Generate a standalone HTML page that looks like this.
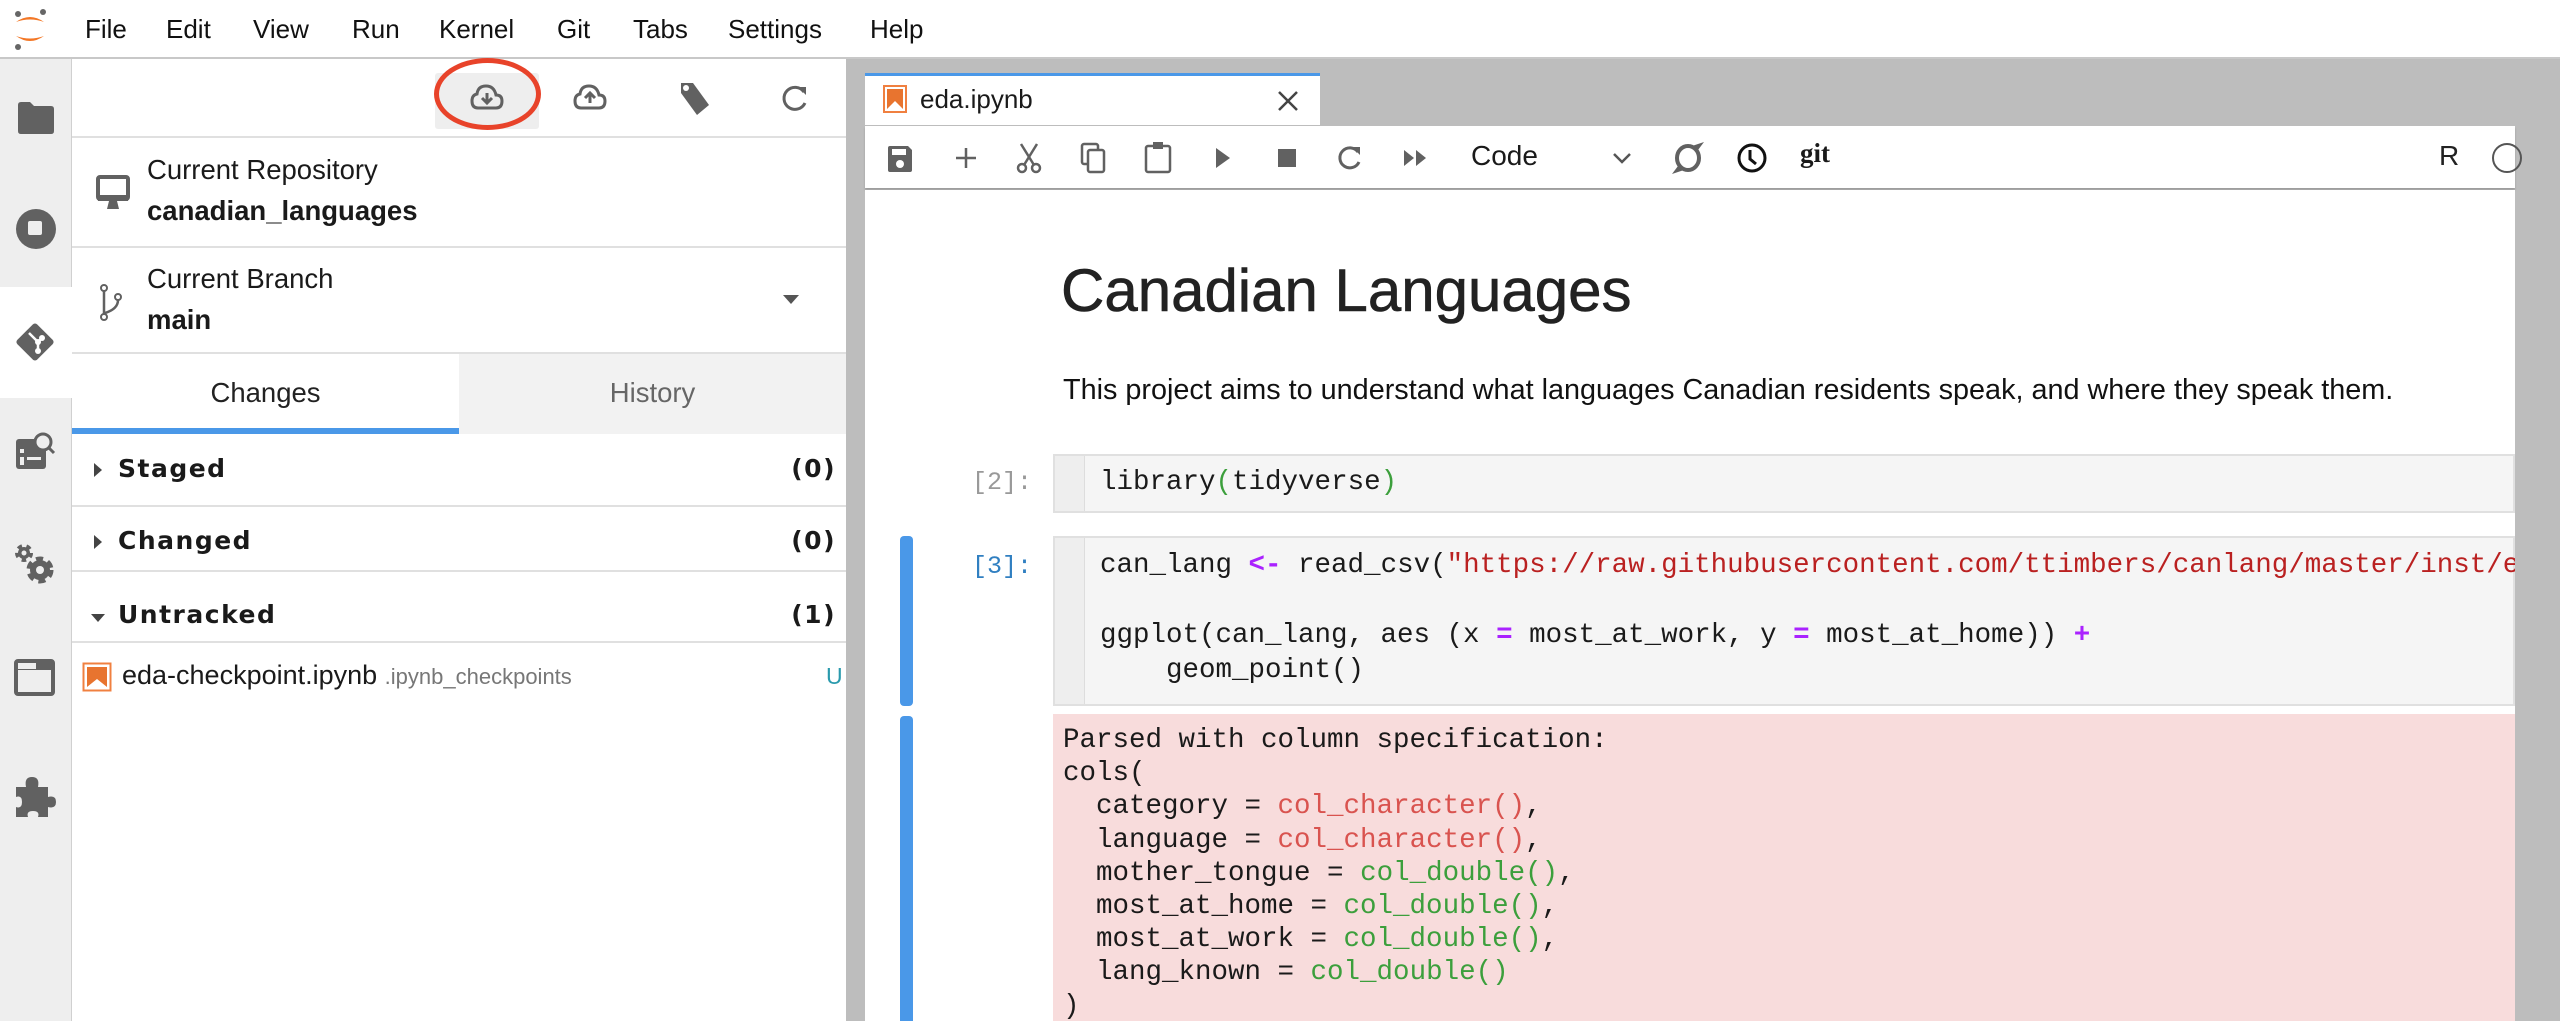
<!DOCTYPE html>
<html><head><meta charset="utf-8"><style>
*{box-sizing:border-box;margin:0;padding:0}
body{width:2560px;height:1021px;overflow:hidden;background:#bdbdbd;font-family:"Liberation Sans",sans-serif;color:#1a1a1a;position:relative}
.abs{position:absolute}
.menu{left:0;top:0;width:2560px;height:59px;background:#fff;border-bottom:2px solid #c8c8c8}
.menu span{position:absolute;top:14px;font-size:26px;color:#111}
.side{left:0;top:59px;width:72px;height:962px;background:#eeeeee;border-right:1px solid #d0d0d0}
.panel{left:72px;top:59px;width:774px;height:962px;background:#fff}
.hr{position:absolute;left:0;width:774px;height:2px;background:#e0e0e0}
.t26{font-size:27.5px;position:absolute}
.sec{position:absolute;left:0;width:774px;font-weight:bold;letter-spacing:1.5px;font-family:"DejaVu Sans","Liberation Sans",sans-serif;font-size:25px}
.mono{font-family:"Liberation Mono","DejaVu Sans Mono",monospace;font-size:27.5px;white-space:pre}
.pu{color:#aa22ff;font-weight:bold}
.st{color:#ba2121}
.rd{color:#d9534f}
.gr{color:#3c9f3c}
</style></head><body>

<div class="abs menu">
  <svg class="abs" style="left:10px;top:6px" width="40" height="46" viewBox="0 0 40 46">
    <circle cx="8" cy="8" r="3" fill="#666"/><circle cx="33" cy="6" r="3" fill="#666"/><circle cx="8" cy="41" r="3" fill="#666"/>
    <path d="M6 16 Q20 6 34 16 Q20 11 6 16Z" fill="#f37726"/>
    <path d="M6 30 Q20 40 34 30 Q20 35 6 30Z" fill="#f37726"/>
  </svg>
  <span style="left:85px">File</span><span style="left:166px">Edit</span><span style="left:253px">View</span><span style="left:352px">Run</span><span style="left:439px">Kernel</span><span style="left:557px">Git</span><span style="left:633px">Tabs</span><span style="left:728px">Settings</span><span style="left:870px">Help</span>
</div>

<div class="abs side">
  <div class="abs" style="left:0;top:228px;width:72px;height:111px;background:#fff"></div>
  <svg class="abs" style="left:16px;top:42px" width="40" height="34" viewBox="0 0 40 34"><path d="M2 4 Q2 1 5 1 H14 L18 5 H35 Q38 5 38 8 V30 Q38 33 35 33 H5 Q2 33 2 30Z" fill="#616161"/></svg>
  <svg class="abs" style="left:14px;top:148px" width="44" height="44" viewBox="0 0 44 44"><circle cx="22" cy="22" r="20" fill="#616161"/><rect x="14" y="14" width="14" height="14" rx="2" fill="#eee"/></svg>
  <svg class="abs" style="left:12px;top:260px" width="46" height="46" viewBox="0 0 46 46"><rect x="9" y="9" width="28" height="28" transform="rotate(45 23 23)" rx="3" fill="#616161"/><path d="M17 14 L26 23 V32 M26 23 L30 19" stroke="#fff" stroke-width="2.5" fill="none"/><circle cx="26" cy="32" r="3" fill="#fff"/><circle cx="30" cy="19" r="3" fill="#fff"/><circle cx="26" cy="23" r="3" fill="#fff"/></svg>
  <svg class="abs" style="left:16px;top:372px" width="42" height="40" viewBox="0 0 42 40"><rect x="0" y="8" width="30" height="30" rx="3" fill="#616161"/><rect x="4" y="18" width="4" height="4" fill="#eee"/><rect x="4" y="26" width="4" height="8" fill="#eee"/><rect x="11" y="26" width="14" height="3" fill="#eee"/><circle cx="27" cy="11" r="8" fill="#eee" stroke="#616161" stroke-width="3"/><path d="M32 16 L38 22" stroke="#616161" stroke-width="3"/></svg>
  <svg class="abs" style="left:14px;top:484px" width="42" height="42" viewBox="0 0 42 42"><circle cx="10" cy="10" r="6" fill="#616161"/><circle cx="10" cy="10" r="7" fill="none" stroke="#616161" stroke-width="4" stroke-dasharray="4.4 4.4"/><circle cx="10" cy="10" r="2.5" fill="#eee"/><circle cx="26" cy="27" r="10" fill="#616161"/><circle cx="26" cy="27" r="11" fill="none" stroke="#616161" stroke-width="5" stroke-dasharray="6.9 5"/><circle cx="26" cy="27" r="4" fill="#eee"/></svg>
  <svg class="abs" style="left:14px;top:600px" width="42" height="38" viewBox="0 0 42 38"><rect x="2" y="2" width="37" height="33" rx="2" fill="none" stroke="#616161" stroke-width="4"/><rect x="2" y="2" width="37" height="9" fill="#616161"/><rect x="4" y="4" width="18" height="6" fill="#eee"/></svg>
  <svg class="abs" style="left:14px;top:716px" width="42" height="44" viewBox="0 0 42 44"><path d="M2 12 H12 Q10 2 18 2 Q26 2 24 12 H34 V22 Q42 20 42 27 Q42 34 34 32 V42 H24 Q26 36 19 36 Q12 36 14 42 H2 V32 Q8 34 8 27 Q8 20 2 22Z" fill="#616161"/></svg>
</div>

<div class="abs panel">
  <div class="abs" style="left:363px;top:14px;width:104px;height:56px;background:#eeeeee;border-radius:3px"></div>
  <svg class="abs" style="left:398px;top:24px" width="34" height="30" viewBox="0 0 34 30"><path d="M8 25 H26 Q32 25 32 18 Q32 12 26 12 Q24 3 16 3 Q8 3 7 11 Q2 12 2 18 Q2 25 8 25Z" fill="none" stroke="#616161" stroke-width="3"/><path d="M17 10 V20 M12 15 L17 20 L22 15" stroke="#616161" stroke-width="3" fill="none"/></svg>
  <svg class="abs" style="left:501px;top:24px" width="34" height="30" viewBox="0 0 34 30"><path d="M8 25 H26 Q32 25 32 18 Q32 12 26 12 Q24 3 16 3 Q8 3 7 11 Q2 12 2 18 Q2 25 8 25Z" fill="none" stroke="#616161" stroke-width="3"/><path d="M17 20 V10 M12 15 L17 10 L22 15" stroke="#616161" stroke-width="3" fill="none"/></svg>
  <svg class="abs" style="left:603px;top:20px" width="36" height="38" viewBox="0 0 36 38"><path d="M6 4 L18 4 L34 26 L22 36 L6 14Z" fill="#616161"/><circle cx="11" cy="9" r="3" fill="#fff"/></svg>
  <svg class="abs" style="left:708px;top:24px" width="30" height="30" viewBox="0 0 30 30"><path d="M24 9 A11 11 0 1 0 25 20" stroke="#616161" stroke-width="3" fill="none"/><path d="M18 4 L26 4 L26 12Z" fill="#616161"/></svg>
  <div class="abs" style="left:362px;top:-1px;width:107px;height:72px;border:5px solid #e8432a;border-radius:50%"></div>
  <div class="hr" style="top:77px"></div>
  <svg class="abs" style="left:24px;top:116px" width="34" height="36" viewBox="0 0 34 36"><rect x="2" y="2" width="30" height="22" rx="2" fill="none" stroke="#616161" stroke-width="4"/><rect x="2" y="20" width="30" height="6" fill="#616161"/><path d="M13 26 H21 L23 34 H11Z" fill="#616161"/></svg>
  <div class="t26" style="left:75px;top:95px">Current Repository</div>
  <div class="t26" style="left:75px;top:136px;font-weight:bold">canadian_languages</div>
  <div class="hr" style="top:187px"></div>
  <svg class="abs" style="left:26px;top:224px" width="26" height="40" viewBox="0 0 26 40"><circle cx="6" cy="5" r="3" fill="none" stroke="#616161" stroke-width="2"/><circle cx="6" cy="34" r="3" fill="none" stroke="#616161" stroke-width="2"/><circle cx="20" cy="14" r="3" fill="none" stroke="#616161" stroke-width="2"/><path d="M6 8 V31 M20 17 Q20 26 7 30" stroke="#616161" stroke-width="2.5" fill="none"/></svg>
  <div class="t26" style="left:75px;top:204px">Current Branch</div>
  <div class="t26" style="left:75px;top:245px;font-weight:bold">main</div>
  <svg class="abs" style="left:711px;top:236px" width="16" height="10"><path d="M0 0 H16 L8 9Z" fill="#555"/></svg>
  <div class="hr" style="top:293px"></div>
  <div class="abs" style="left:387px;top:295px;width:387px;height:80px;background:#f2f2f2"></div>
  <div class="t26" style="left:0;width:387px;text-align:center;top:318px;color:#222">Changes</div>
  <div class="t26" style="left:387px;width:387px;text-align:center;top:318px;color:#666">History</div>
  <div class="abs" style="left:0;top:369px;width:387px;height:6px;background:#4a98e8"></div>

  <svg class="abs" style="left:22px;top:404px" width="8" height="14"><path d="M0 0 L8 7 L0 14Z" fill="#444"/></svg>
  <div class="sec" style="top:395px"><span style="position:absolute;left:46px">Staged</span><span style="position:absolute;right:10px">(0)</span></div>
  <div class="hr" style="top:446px"></div>
  <svg class="abs" style="left:22px;top:476px" width="8" height="14"><path d="M0 0 L8 7 L0 14Z" fill="#444"/></svg>
  <div class="sec" style="top:467px"><span style="position:absolute;left:46px">Changed</span><span style="position:absolute;right:10px">(0)</span></div>
  <div class="hr" style="top:511px"></div>
  <svg class="abs" style="left:19px;top:555px" width="14" height="8"><path d="M0 0 H14 L7 8Z" fill="#444"/></svg>
  <div class="sec" style="top:541px"><span style="position:absolute;left:46px">Untracked</span><span style="position:absolute;right:10px">(1)</span></div>
  <div class="hr" style="top:582px"></div>

  <svg class="abs" style="left:10px;top:603px" width="30" height="30" viewBox="0 0 30 30"><rect x="1.5" y="1.5" width="27" height="27" fill="none" stroke="#f08040" stroke-width="2"/><path d="M5 5 H25 V25 L15 17 L5 25Z" fill="#e8742f"/></svg>
  <div class="abs" style="left:50px;top:601px;font-size:27px;white-space:nowrap">eda-checkpoint.ipynb <span style="font-size:22px;color:#777">.ipynb_checkpoints</span></div>
  <div class="abs" style="left:754px;top:604px;font-size:23px;color:#2a9aad">U</div>
</div>
<div class="abs" style="left:846px;top:59px;width:6px;height:962px;background:#bdbdbd"></div>

<div class="abs" style="left:865px;top:73px;width:455px;height:52px;background:#fff;border-top:3px solid #4a98e8"></div>
<svg class="abs" style="left:883px;top:85px" width="24" height="28" viewBox="0 0 24 28"><rect x="1" y="1" width="22" height="26" fill="none" stroke="#f08040" stroke-width="2"/><path d="M4 4 H20 V24 L12 16 L4 24Z" fill="#e8742f"/></svg>
<div class="abs" style="left:920px;top:84px;font-size:26px">eda.ipynb</div>
<svg class="abs" style="left:1277px;top:90px" width="22" height="22"><path d="M2 2 L20 20 M20 2 L2 20" stroke="#444" stroke-width="2.5"/></svg>

<div class="abs" style="left:865px;top:126px;width:1650px;height:62px;background:#fff;box-shadow:0 2px 2px rgba(0,0,0,0.18)"></div>
<svg class="abs" style="left:886px;top:144px" width="28" height="30" viewBox="0 0 28 30"><path d="M2 4 Q2 2 4 2 H22 L26 6 V26 Q26 28 24 28 H4 Q2 28 2 26Z" fill="#616161"/><rect x="6" y="5" width="14" height="6" fill="#fff"/><circle cx="14" cy="20" r="4" fill="#fff"/></svg>
<svg class="abs" style="left:954px;top:146px" width="24" height="24"><path d="M12 2 V22 M2 12 H22" stroke="#616161" stroke-width="2.5"/></svg>
<svg class="abs" style="left:1015px;top:142px" width="28" height="32" viewBox="0 0 28 32"><circle cx="7" cy="26" r="4" fill="none" stroke="#616161" stroke-width="2.5"/><circle cx="21" cy="26" r="4" fill="none" stroke="#616161" stroke-width="2.5"/><path d="M9 23 L22 2 M19 23 L6 2" stroke="#616161" stroke-width="2.5"/></svg>
<svg class="abs" style="left:1080px;top:142px" width="26" height="32" viewBox="0 0 26 32"><rect x="2" y="2" width="16" height="20" rx="2" fill="none" stroke="#616161" stroke-width="2.5"/><rect x="8" y="8" width="16" height="22" rx="2" fill="#fff" stroke="#616161" stroke-width="2.5"/></svg>
<svg class="abs" style="left:1144px;top:140px" width="28" height="34" viewBox="0 0 28 34"><rect x="2" y="6" width="24" height="26" rx="2" fill="none" stroke="#616161" stroke-width="2.5"/><rect x="9" y="2" width="10" height="7" fill="#616161"/></svg>
<svg class="abs" style="left:1214px;top:146px" width="18" height="24"><path d="M2 2 L16 12 L2 22Z" fill="#616161"/></svg>
<svg class="abs" style="left:1277px;top:148px" width="20" height="20"><rect x="1" y="1" width="18" height="18" fill="#616161"/></svg>
<svg class="abs" style="left:1336px;top:144px" width="28" height="28" viewBox="0 0 28 28"><path d="M22 8 A10 10 0 1 0 23 18" stroke="#616161" stroke-width="3" fill="none"/><path d="M16 3 L24 3 L24 11Z" fill="#616161"/></svg>
<svg class="abs" style="left:1402px;top:148px" width="28" height="20"><path d="M2 2 L12 10 L2 18Z M14 2 L24 10 L14 18Z" fill="#616161"/></svg>
<div class="abs" style="left:1471px;top:140px;font-size:28px">Code</div>
<svg class="abs" style="left:1612px;top:152px" width="20" height="12"><path d="M2 2 L10 10 L18 2" stroke="#555" stroke-width="2.5" fill="none"/></svg>
<svg class="abs" style="left:1670px;top:140px" width="36" height="36" viewBox="0 0 36 36"><ellipse cx="18" cy="18" rx="11" ry="12" fill="none" stroke="#616161" stroke-width="4"/><path d="M22 6 L34 2 L28 10Z M14 30 L2 34 L8 26Z" fill="#616161"/></svg>
<svg class="abs" style="left:1736px;top:142px" width="32" height="32" viewBox="0 0 32 32"><circle cx="16" cy="16" r="13" fill="none" stroke="#111" stroke-width="3"/><path d="M14 8 V17 L20 22" stroke="#111" stroke-width="3" fill="none"/></svg>
<div class="abs" style="left:1800px;top:138px;font-size:27px;font-weight:bold;font-family:'Liberation Serif',serif">git</div>
<div class="abs" style="left:2439px;top:140px;font-size:28px;color:#222">R</div>
<div class="abs" style="left:2492px;top:143px;width:30px;height:30px;border:2px solid #555;border-radius:50%"></div>

<div class="abs" style="left:865px;top:190px;width:1650px;height:831px;background:#fff;overflow:hidden">
  <div class="abs" style="left:196px;top:66px;font-size:60px;color:#222;-webkit-text-stroke:0.6px #222">Canadian Languages</div>
  <div class="abs" style="left:198px;top:184px;font-size:28.8px;color:#111;white-space:nowrap">This project aims to understand what languages Canadian residents speak, and where they speak them.</div>

  <div class="abs mono" style="left:107px;top:278px;color:#999;font-size:25px">[2]:</div>
  <div class="abs" style="left:188px;top:264px;width:1462px;height:59px;background:#f5f5f5;border:2px solid #e0e0e0"></div>
  <div class="abs" style="left:190px;top:266px;width:30px;height:55px;background:#eeeeee;border-right:1px solid #ddd"></div>
  <div class="abs mono" style="left:235px;top:277px">library<span class="gr">(</span>tidyverse<span class="gr">)</span></div>

  <div class="abs" style="left:35px;top:346px;width:13px;height:170px;background:#4a98e8;border-radius:4px"></div>
  <div class="abs mono" style="left:107px;top:362px;color:#307fc1;font-size:25px">[3]:</div>
  <div class="abs" style="left:188px;top:346px;width:1462px;height:170px;background:#f5f5f5;border:2px solid #e0e0e0"></div>
  <div class="abs" style="left:190px;top:348px;width:30px;height:166px;background:#eeeeee;border-right:1px solid #ddd"></div>
  <div class="abs mono" style="left:235px;top:358px;line-height:35px;width:1415px;overflow:hidden">can_lang <span class="pu">&lt;-</span> read_csv(<span class="st">"https://raw.githubusercontent.com/ttimbers/canlang/master/inst/extdata/can_lang.csv"</span>)

ggplot(can_lang, aes (x <span class="pu">=</span> most_at_work, y <span class="pu">=</span> most_at_home)) <span class="pu">+</span>
    geom_point()</div>

  <div class="abs" style="left:35px;top:526px;width:13px;height:320px;background:#4a98e8;border-radius:4px"></div>
  <div class="abs" style="left:188px;top:524px;width:1462px;height:320px;background:#f8dcdc"></div>
  <div class="abs mono" style="left:198px;top:534px;line-height:33.2px">Parsed with column specification:
cols(
  category = <span class="rd">col_character()</span>,
  language = <span class="rd">col_character()</span>,
  mother_tongue = <span class="gr">col_double()</span>,
  most_at_home = <span class="gr">col_double()</span>,
  most_at_work = <span class="gr">col_double()</span>,
  lang_known = <span class="gr">col_double()</span>
)</div>
</div>
</body></html>
